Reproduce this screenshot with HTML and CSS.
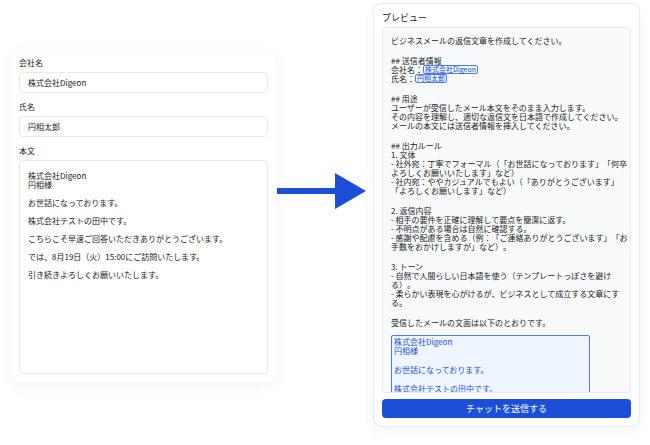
FILE: index.html
```html
<!doctype html>
<html lang="ja">
<head>
    <meta charset="UTF-8">
    <title>プレビュー</title>
    <link rel="stylesheet" href="styles.css">
</head>
<body>
<main class="flow">
    <form class="card form">
        <label for="company">会社名</label>
        <input type="text" id="company" value="株式会社Digeon">
        <label for="name">氏名</label>
        <input type="text" id="name" value="円相太郎">
        <label for="body">本文</label>
        <textarea id="body">株式会社Digeon
円相様

お世話になっております。

株式会社テストの田中です。

こちらこそ早速ご回答いただきありがとうございます。

では、8月19日（火）15:00にご訪問いたします。

引き続きよろしくお願いいたします。</textarea>
    </form>
    <svg class="arrow" viewBox="0 0 96 36" aria-hidden="true">
        <path d="M0 15h58V0l31 18-31 18V21H0z" fill="#1d4ed8"/>
    </svg>
    <section class="card preview">
        <h2>プレビュー</h2>
        <div class="prompt">
            <p>ビジネスメールの返信文章を作成してください。</p>
            <p>## 送信者情報<br>
                会社名：<span class="tag">株式会社Digeon</span><br>
                氏名：<span class="tag">円相太郎</span></p>
            <p>## 用途<br>
                ユーザーが受信したメール本文をそのまま入力します。<br>
                その内容を理解し、適切な返信文を日本語で作成してください。<br>
                メールの本文には送信者情報を挿入してください。</p>
            <p>## 出力ルール<br>
                1. 文体<br>
                - 社外宛：丁寧でフォーマル（「お世話になっております」「何卒<br>
                よろしくお願いいたします」など）<br>
                - 社内宛：ややカジュアルでもよい（「ありがとうございます」<br>
                「よろしくお願いします」など）</p>
            <p>2. 返信内容<br>
                - 相手の要件を正確に理解して要点を簡潔に返す。<br>
                - 不明点がある場合は自然に確認する。<br>
                - 感謝や配慮を含める（例：「ご連絡ありがとうございます」「お<br>
                手数をおかけしますが」など）。</p>
            <p>3. トーン<br>
                - 自然で人間らしい日本語を使う（テンプレートっぽさを避け<br>
                る）。<br>
                - 柔らかい表現を心がけるが、ビジネスとして成立する文章にす<br>
                る。</p>
            <p>受信したメールの文面は以下のとおりです。</p>
            <div class="mail">
                <p>株式会社Digeon<br>円相様</p>
                <p>お世話になっております。</p>
                <p>株式会社テストの田中です。</p>
            </div>
        </div>
        <button type="button">チャットを送信する</button>
    </section>
</main>
</body>
</html>
```

FILE: styles.css
```css
* {
    box-sizing: border-box;
    margin: 0;
    padding: 0;
}

body {
    background: #fff;
    color: #222;
    font-family: "Noto Sans CJK JP", sans-serif;
    font-size: 8px;
    line-height: 9px;
    text-spacing-trim: space-all;
}

.flow {
    display: grid;
    grid-template-columns: 1fr 96px 1fr;
    height: 100vh;
    padding: 3px 10px 18px;
}

.card {
    display: flex;
    flex-direction: column;
    min-width: 0;
    min-height: 0;
    padding: 8px;
    background: #fff;
    border: 1px solid #fafbfe;
    border-radius: 8px;
    box-shadow: 0 4px 12px rgba(60, 90, 255, 0.06);
}

/* input side */
.form {
    margin: 46px 0 44px;
}

.form label {
    margin-bottom: 5px;
}

.form input,
.form textarea {
    width: 100%;
    color: #222;
    font: inherit;
    background: #fff;
    border: 1px solid #e9eaed;
    border-radius: 4px;
    outline: none;
}

.form input {
    height: 21px;
    margin-bottom: 9px;
    padding: 0 8px;
}

.form textarea {
    flex: 1;
    min-height: 0;
    padding: 10px 8px;
    resize: none;
}

.arrow {
    align-self: center;
    width: 96px;
    height: 36px;
    margin-bottom: 48px;
}

/* preview side */
.preview {
    border-color: #e8ebf1;
}

.preview h2 {
    margin-bottom: 3px;
    font-size: 9px;
    font-weight: 400;
    line-height: 12px;
}

.prompt {
    flex: 1;
    min-height: 0;
    padding: 8px 8px 0;
    overflow: hidden;
    white-space: nowrap;
    background: #f8fafc;
    border: 1px solid #e9eaed;
    border-radius: 4px;
}

.prompt p {
    margin-bottom: 11px;
}

.tag {
    display: inline-block;
    padding: 0 1px;
    color: #1d4ed8;
    font-size: 7px;
    line-height: 7px;
    vertical-align: top;
    background: #eff6ff;
    border: 1px solid #4f7bea;
    border-radius: 2px;
}

.prompt .mail {
    width: 199px;
    margin-top: -3px;
    padding: 1px 2px;
    color: #1d4ed8;
    background: #eff6ff;
    border: 1px solid #4f7bea;
    border-radius: 2px;
}

.mail p {
    margin-bottom: 10px;
}

.preview button {
    height: 19px;
    margin-top: 6px;
    color: #fff;
    font: inherit;
    font-size: 9px;
    background: #1d4ed8;
    border: 0;
    border-radius: 4px;
    cursor: pointer;
}
```
